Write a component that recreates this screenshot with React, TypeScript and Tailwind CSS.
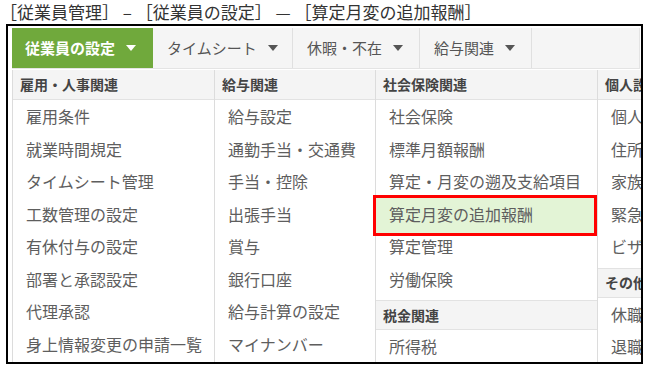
import React from "react";

const Caret = ({ color }: { color: string }) => (
  <svg width="10" height="6" viewBox="0 0 10 6" className="shrink-0">
    <polygon points="0,0 10,0 5,6" fill={color} />
  </svg>
);

type Entry = { t: string; h?: boolean; sel?: boolean };

const Header = ({ t, first }: { t: string; first?: boolean }) => (
  <div
    className={
      "h-[30px] flex items-center pl-[7px] bg-[#f4f4f4] border-b border-[#e2e2e2] text-[14px] font-bold text-[#444] whitespace-nowrap " +
      (first ? "" : "mt-[5px] border-t")
    }
  >
    {t}
  </div>
);

const Item = ({ t, sel }: { t: string; sel?: boolean }) => (
  <div className="relative h-[32.5px] flex items-center pl-[13px] text-[16px] text-[#5e5e5e] whitespace-nowrap">
    {sel && (
      <div className="absolute -top-[3px] -bottom-[6px] -left-[3px] right-0 border-[3px] border-[#ff0000] bg-[#e3f4d6]" />
    )}
    <span className="relative">{t}</span>
  </div>
);

const Column = ({ w, entries }: { w: string; entries: Entry[] }) => (
  <div className={"shrink-0 border-l border-[#dcdcdc] " + w}>
    {entries.map((e, i) =>
      e.h ? <Header key={i} t={e.t} first={i === 0} /> : <Item key={i} t={e.t} sel={e.sel} />
    )}
  </div>
);

export default function App() {
  const col1: Entry[] = [
    { t: "雇用・人事関連", h: true },
    { t: "雇用条件" },
    { t: "就業時間規定" },
    { t: "タイムシート管理" },
    { t: "工数管理の設定" },
    { t: "有休付与の設定" },
    { t: "部署と承認設定" },
    { t: "代理承認" },
    { t: "身上情報変更の申請一覧" },
  ];
  const col2: Entry[] = [
    { t: "給与関連", h: true },
    { t: "給与設定" },
    { t: "通勤手当・交通費" },
    { t: "手当・控除" },
    { t: "出張手当" },
    { t: "賞与" },
    { t: "銀行口座" },
    { t: "給与計算の設定" },
    { t: "マイナンバー" },
  ];
  const col3: Entry[] = [
    { t: "社会保険関連", h: true },
    { t: "社会保険" },
    { t: "標準月額報酬" },
    { t: "算定・月変の遡及支給項目" },
    { t: "算定月変の追加報酬", sel: true },
    { t: "算定管理" },
    { t: "労働保険" },
    { t: "税金関連", h: true },
    { t: "所得税" },
  ];
  const col4: Entry[] = [
    { t: "個人設定関連", h: true },
    { t: "個人情報" },
    { t: "住所情報" },
    { t: "家族情報" },
    { t: "緊急連絡先" },
    { t: "ビザ情報" },
    { t: "その他", h: true },
    { t: "休職情報" },
    { t: "退職情報" },
  ];

  return (
    <div className="w-[652px] h-[367px] bg-white overflow-hidden font-['Noto_Sans_CJK_JP',sans-serif]">
      <div className="h-[24px] text-[17px] leading-[23px] text-[#333] whitespace-nowrap">
        ［従業員管理］ – ［従業員の設定］ — ［算定月変の追加報酬］
      </div>
      <div className="ml-[6px] w-[637px] h-[340px] border-2 border-black overflow-hidden pt-[2px] pl-[4px] pr-[1px]">
        <div className="flex h-[41px] bg-[#f5f5f5] border-b border-r border-[#e4e4e4]">
          <div className="w-[141px] flex items-center gap-[11px] pl-[13px] bg-[#70a93c] text-white text-[15px] font-bold">
            <span>従業員の設定</span>
            <Caret color="#ffffff" />
          </div>
          <div className="w-[140px] flex items-center gap-[11px] pl-[14px] border-r border-[#e0e0e0] text-[15px] text-[#555]">
            <span>タイムシート</span>
            <Caret color="#555555" />
          </div>
          <div className="w-[127px] flex items-center gap-[11px] pl-[14px] border-r border-[#e0e0e0] text-[15px] text-[#555]">
            <span>休暇・不在</span>
            <Caret color="#555555" />
          </div>
          <div className="w-[112px] flex items-center gap-[11px] pl-[14px] border-r border-[#e0e0e0] text-[15px] text-[#555]">
            <span>給与関連</span>
            <Caret color="#555555" />
          </div>
        </div>
        <div className="mt-[1px] flex">
          <Column w="w-[202px]" entries={col1} />
          <Column w="w-[161px]" entries={col2} />
          <Column w="w-[222px]" entries={col3} />
          <Column w="w-[160px]" entries={col4} />
        </div>
      </div>
    </div>
  );
}
